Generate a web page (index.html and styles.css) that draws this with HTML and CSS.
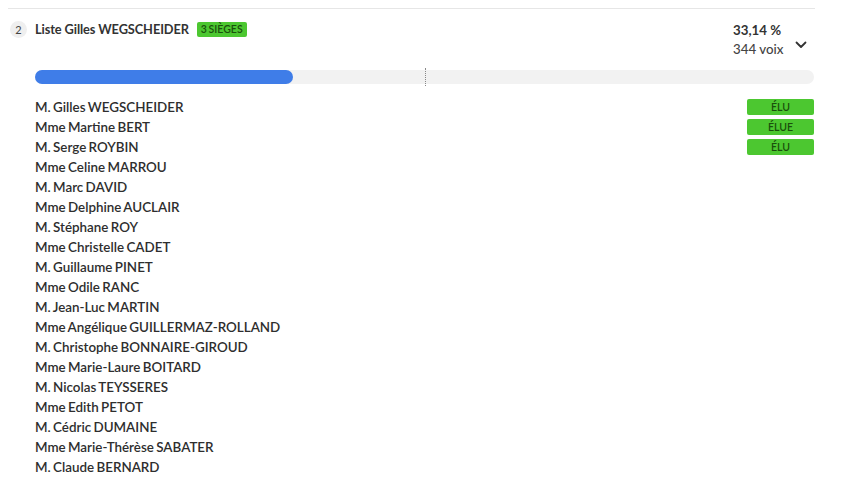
FILE: index.html
```html
<!DOCTYPE html>
<html lang="fr">
<head>
<meta charset="utf-8">
<link rel="stylesheet" href="styles.css">
</head>
<body>
<div class="card">
  <div class="header">
    <div class="num">2</div>
    <div class="title">
      <span class="name">Liste Gilles WEGSCHEIDER</span>
      <span class="seats">3 SIÈGES</span>
    </div>
    <div class="stats">
      <div class="pct">33,14 %</div>
      <div class="votes">344 voix</div>
    </div>
    <div class="chev">
      <svg width="12" height="8" viewBox="0 0 12 8"><path d="M1.5 1.5 L6 6 L10.5 1.5" fill="none" stroke="#333" stroke-width="1.8" stroke-linecap="round" stroke-linejoin="round"/></svg>
    </div>
  </div>
  <div class="body">
    <div class="bar">
      <div class="fill" style="width:33.14%"></div>
      <div class="mid"></div>
    </div>
    <ul class="list">
      <li><span>M. Gilles WEGSCHEIDER</span><span class="elu">ÉLU</span></li>
      <li><span>Mme Martine BERT</span><span class="elu">ÉLUE</span></li>
      <li><span>M. Serge ROYBIN</span><span class="elu">ÉLU</span></li>
      <li><span>Mme Celine MARROU</span></li>
      <li><span>M. Marc DAVID</span></li>
      <li><span>Mme Delphine AUCLAIR</span></li>
      <li><span>M. Stéphane ROY</span></li>
      <li><span>Mme Christelle CADET</span></li>
      <li><span>M. Guillaume PINET</span></li>
      <li><span>Mme Odile RANC</span></li>
      <li><span>M. Jean-Luc MARTIN</span></li>
      <li><span>Mme Angélique GUILLERMAZ-ROLLAND</span></li>
      <li><span>M. Christophe BONNAIRE-GIROUD</span></li>
      <li><span>Mme Marie-Laure BOITARD</span></li>
      <li><span>M. Nicolas TEYSSERES</span></li>
      <li><span>Mme Edith PETOT</span></li>
      <li><span>M. Cédric DUMAINE</span></li>
      <li><span>Mme Marie-Thérèse SABATER</span></li>
      <li><span>M. Claude BERNARD</span></li>
    </ul>
  </div>
</div>
</body>
</html>
```
FILE: styles.css
```css
* { box-sizing: border-box; }
body {
  margin: 0;
  background: #fff;
  font-family: "Lato", "Open Sans", sans-serif;
  color: #333;
}
.card {
  margin: 8px 35px 0 8px;
  border-top: 1px solid #e6e6e6;
}
.header {
  display: flex;
  align-items: flex-start;
  padding-top: 12px;
}
.num {
  width: 17px;
  height: 17px;
  margin: 0 8px 0 2px;
  border-radius: 50%;
  background: #efefef;
  font-size: 11px;
  line-height: 17px;
  text-align: center;
  color: #444;
}
.title {
  flex: 1;
  display: flex;
  align-items: center;
  gap: 8px;
  height: 16px;
}
.name {
  font-weight: 700;
  font-size: 12.8px;
  letter-spacing: -0.1px;
}
.seats {
  background: #4cc730;
  color: #1a4f0c;
  font-size: 10.5px;
  font-weight: 600;
  padding: 0 4px;
  height: 15px;
  line-height: 15px;
  border-radius: 2px;
  word-spacing: -1px;
}
.stats {
  width: 62px;
  font-size: 13.3px;
  line-height: 19px;
}
.pct { font-weight: 700; }
.votes { color: #444; font-weight: 500; }
.chev {
  width: 20px;
  padding-top: 20px;
  display: flex;
  justify-content: flex-start;
}
.body {
  padding-left: 27px;
  padding-right: 1px;
}
.bar {
  position: relative;
  margin-top: 11px;
  height: 14px;
  border-radius: 7px;
  background: #f2f2f2;
}
.fill {
  height: 100%;
  border-radius: 7px;
  background: #3f7de8;
}
.mid {
  position: absolute;
  left: 50%;
  top: -2px;
  height: 18px;
  border-left: 1px dotted #888;
}
.list {
  list-style: none;
  margin: 13px 0 0;
  padding: 0;
}
.list li {
  display: flex;
  justify-content: space-between;
  align-items: center;
  height: 20px;
  font-size: 13.4px;
  font-weight: 600;
  word-spacing: -1px;
  color: #2e2e2e;
}
.elu {
  width: 67px;
  height: 16px;
  line-height: 16px;
  border-radius: 2px;
  background: #4cc730;
  color: #1a4f0c;
  font-size: 10.5px;
  font-weight: 600;
  text-align: center;
}
```
